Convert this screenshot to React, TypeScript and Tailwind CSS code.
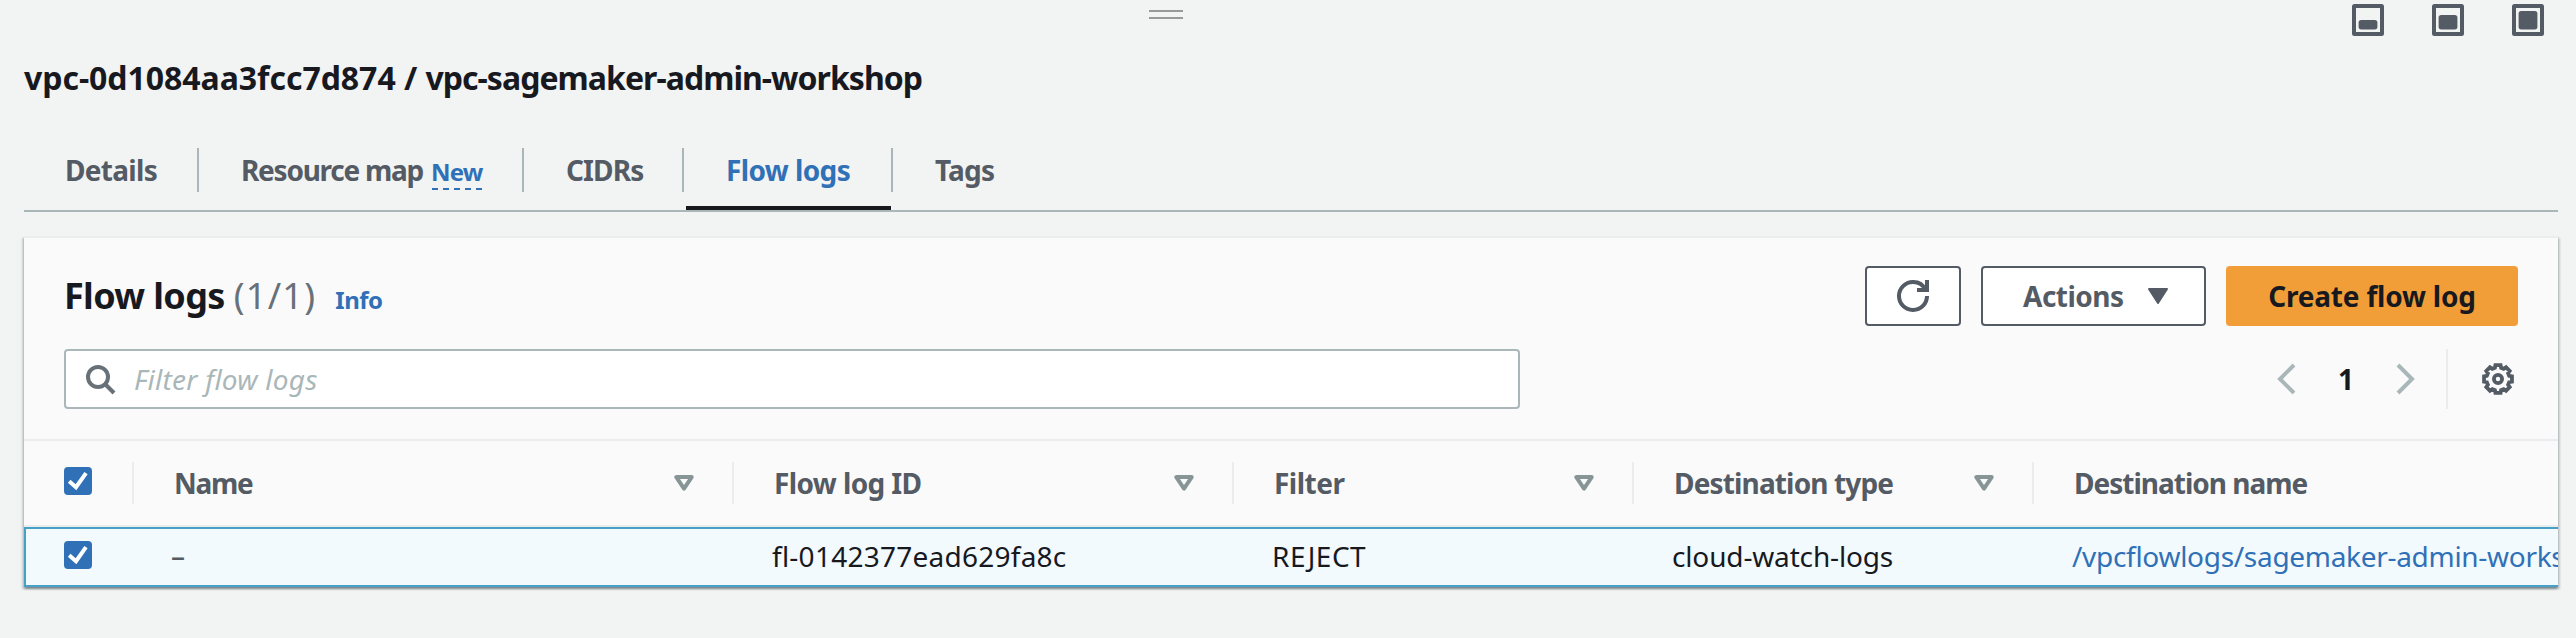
import type { ReactNode } from "react";

const columns = [
  { label: "Name", width: "w-[600px]", tracking: "tracking-[-1.3px]", sortable: true },
  { label: "Flow log ID", width: "w-[500px]", tracking: "tracking-[-0.6px]", sortable: true },
  { label: "Filter", width: "w-[400px]", tracking: "tracking-[-0.5px]", sortable: true },
  { label: "Destination type", width: "w-[400px]", tracking: "tracking-[-0.85px]", sortable: true },
  { label: "Destination name", width: "w-[524px]", tracking: "tracking-[-1px]", sortable: false },
];

function PanelIcon({ top }: { top: number }) {
  return (
    <svg width="32" height="32" viewBox="0 0 32 32" fill="#545b64">
      <rect x="2" y="2" width="28" height="28" rx="0.5" fill="none" stroke="#545b64" strokeWidth="4" />
      <rect x="6.6" y={top} width="18.8" height={25.4 - top} rx="2.6" />
    </svg>
  );
}

function RefreshIcon() {
  return (
    <svg width="32" height="32" viewBox="0 0 16 16" fill="none" stroke="#545b64" strokeWidth="2">
      <path d="M10 5h5V0" />
      <path d="M15 8a6.957 6.957 0 0 1-7 7 6.957 6.957 0 0 1-7-7 6.957 6.957 0 0 1 7-7 6.87 6.87 0 0 1 6.3 4" />
    </svg>
  );
}

function SearchIcon() {
  return (
    <svg className="mt-1 shrink-0" width="32" height="32" viewBox="0 0 32 32" fill="none" stroke="#687078" strokeWidth="4">
      <circle cx="12" cy="12" r="10" />
      <path d="M18.5 18.5 28 28" />
    </svg>
  );
}

function Chevron({ flip = false }: { flip?: boolean }) {
  return (
    <svg width="20" height="32" viewBox="0 0 20 32" fill="none" stroke="#aab7b8" strokeWidth="4">
      <path d={flip ? "M3 2 17 16 3 30" : "M17 2 3 16 17 30"} />
    </svg>
  );
}

function gearPath() {
  const pts: string[] = [];
  for (let i = 0; i < 8; i++) {
    const base = i * 45 - 90;
    const corners: [number, number][] = [
      [-15.5, 11.6],
      [-10.5, 14.2],
      [10.5, 14.2],
      [15.5, 11.6],
    ];
    for (const [offset, r] of corners) {
      const a = ((base + offset) * Math.PI) / 180;
      pts.push(`${(16 + r * Math.cos(a)).toFixed(2)} ${(16 + r * Math.sin(a)).toFixed(2)}`);
    }
  }
  return `M${pts.join("L")}Z`;
}

function GearIcon() {
  return (
    <svg width="32" height="32" viewBox="0 0 32 32" fill="none" stroke="#545b64" strokeWidth="3.8">
      <path d={gearPath()} />
      <circle cx="16" cy="16" r="4.1" />
    </svg>
  );
}

function SortIcon() {
  return (
    <svg width="20" height="16" viewBox="0 0 20 16" fill="none" stroke="#879596" strokeWidth="4" strokeLinejoin="round">
      <path d="M2.3 2.1h15.4L10 13.6z" />
    </svg>
  );
}

function Checkbox() {
  return (
    <span className="flex size-7 shrink-0 items-center justify-center rounded-[4px] bg-[#3070b7]">
      <svg width="28" height="28" viewBox="0 0 28 28" fill="none" stroke="#fff" strokeWidth="4">
        <path d="M5.2 14.3 12 20.2 22 6.2" />
      </svg>
    </span>
  );
}

function Tab({ children, className }: { children: ReactNode; className: string }) {
  return (
    <div className={`flex h-11 shrink-0 items-center border-r-2 border-[#aab7b8] pb-px whitespace-nowrap ${className}`}>
      {children}
    </div>
  );
}

export default function App() {
  return (
    <div className="h-[638px] w-[2576px] overflow-hidden bg-[#f2f3f3] font-['Noto_Sans','Open_Sans',sans-serif] text-[28px] leading-10 text-[#17191f]">
      <div className="flex h-[58px] items-start justify-between pr-8 pl-[1149px]">
        <div className="mt-2.5 flex w-[34px] flex-col gap-[5px]">
          <span className="h-0.5 bg-[#999]" />
          <span className="h-0.5 bg-[#999]" />
        </div>
        <div className="mt-1 flex gap-12">
          <PanelIcon top={16} />
          <PanelIcon top={11} />
          <PanelIcon top={7} />
        </div>
      </div>

      <div className="mx-6 w-[2534px]">
        <h2 className="h-[90px] text-[32px] leading-10 font-bold whitespace-nowrap">
          <span className="tracking-[-0.04px]">vpc-0d1084aa3fcc7d874 / </span>
          <span className="tracking-[-0.96px]">vpc-sagemaker-admin-workshop</span>
        </h2>

        <nav className="flex h-16 items-start border-b-2 border-[#aab7b8] font-bold text-[#545b64]">
          <Tab className="w-[175px] pl-[41px] tracking-[-0.7px]">Details</Tab>
          <Tab className="w-[325px] pl-[42px]">
            <span className="w-[183px] tracking-[-1.25px]">Resource map</span>
            <span className="mt-0.5 ml-2 flex w-[50px] flex-col text-2xl leading-8 tracking-[-0.8px] text-[#3070b7]">
              <span className="-ml-px h-9 pt-1">New</span>
              <span className="h-0.5 w-[50px] bg-[repeating-linear-gradient(90deg,#3070b7_0_6px,transparent_6px_11px)]" />
            </span>
          </Tab>
          <Tab className="w-40 pl-[42px] tracking-[-0.9px]">CIDRs</Tab>
          <div className="flex h-[62px] flex-col justify-between">
            <Tab className="w-[209px] pl-[42px] tracking-[-0.6px] text-[#3070b7]">Flow logs</Tab>
            <span className="ml-0.5 h-1 w-[205px] bg-[#17191f]" />
          </div>
          <div className="flex h-11 items-center pb-px pl-[42px] tracking-[-0.8px]">Tags</div>
        </nav>

        <section className="mt-6 h-[351px] border-t-2 border-[#eaeded] bg-[#fafafa] shadow-[0_2px_2px_0_rgba(0,28,36,0.3),2px_2px_2px_0_rgba(0,28,36,0.15),-2px_2px_2px_0_rgba(0,28,36,0.15)]">
          <div className="flex h-[201px] flex-col gap-[23px] px-10 pt-7">
            <div className="flex h-[60px] justify-between">
              <div className="flex items-baseline pt-[5px] whitespace-nowrap">
                <h3 className="text-[36px] leading-[50px] font-bold tracking-[-0.65px]">Flow logs</h3>
                <span className="ml-[9px] text-[36px] leading-[50px] tracking-[1.3px] text-[#687078]">(1/1)</span>
                <a className="ml-[19px] text-2xl font-bold tracking-[-0.5px] text-[#3070b7]">Info</a>
              </div>
              <div className="flex gap-5 font-bold">
                <button className="flex h-[60px] w-24 items-center justify-center rounded-[4px] border-2 border-[#545b64] bg-white">
                  <RefreshIcon />
                </button>
                <button className="flex h-[60px] w-[225px] items-center rounded-[4px] border-2 border-[#545b64] bg-white pl-10 text-[#545b64]">
                  <span className="w-[125px] pb-px text-left tracking-[-0.5px]">Actions</span>
                  <svg width="20" height="16" viewBox="0 0 20 16">
                    <path d="M1 1h18l-9 14z" fill="#545b64" stroke="#545b64" strokeWidth="2" strokeLinejoin="round" />
                  </svg>
                </button>
                <button className="h-[60px] w-[292px] rounded-[4px] bg-[#f19e38] pb-px tracking-[-0.2px]">
                  Create flow log
                </button>
              </div>
            </div>

            <div className="flex h-[60px] items-center justify-between">
              <div className="flex h-[60px] w-[1456px] items-center rounded-[4px] border-2 border-[#aab7b8] bg-white pl-5">
                <SearchIcon />
                <span className="ml-4 tracking-[0.25px] text-[#aab7b8] italic">Filter flow logs</span>
              </div>
              <div className="flex items-center">
                <Chevron />
                <span className="w-[98px] pb-px text-center font-bold">1</span>
                <Chevron flip />
                <span className="ml-[31px] h-[60px] w-0.5 bg-[#eaeded]" />
                <span className="ml-[34px] mr-1">
                  <GearIcon />
                </span>
              </div>
            </div>
          </div>

          <div className="overflow-hidden">
            <div className="flex h-[88px] items-center border-y-2 border-[#eaeded] font-bold text-[#545b64]">
              <div className="flex w-[108px] shrink-0 pb-1 pl-10">
                <Checkbox />
              </div>
              {columns.map((c) => (
                <div
                  key={c.label}
                  className={`flex h-[42px] shrink-0 items-center justify-between border-l-2 border-[#eaeded] pr-[38px] pb-px pl-10 whitespace-nowrap ${c.width} ${c.tracking}`}
                >
                  {c.label}
                  {c.sortable && (
                    <span className="mt-px">
                      <SortIcon />
                    </span>
                  )}
                </div>
              ))}
            </div>

            <div className="flex h-[60px] items-center border-y-2 border-l-2 border-[#47a0c7] bg-[#f2fafd] whitespace-nowrap">
              <div className="flex w-[145px] shrink-0 pb-1 pl-[38px]">
                <Checkbox />
              </div>
              <div className="w-[601px] shrink-0 pb-0.5 font-medium text-[#545b64]">–</div>
              <div className="w-[500px] shrink-0 pb-0.5 tracking-[0.25px]">fl-0142377ead629fa8c</div>
              <div className="w-[400px] shrink-0 pb-0.5 tracking-[0.5px]">REJECT</div>
              <div className="w-[400px] shrink-0 pb-0.5 tracking-[-0.15px]">cloud-watch-logs</div>
              <div className="shrink-0 pb-0.5 tracking-[-0.3px] text-[#3070b7]">
                /vpcflowlogs/sagemaker-admin-workshop
              </div>
            </div>
          </div>
        </section>
      </div>
    </div>
  );
}
